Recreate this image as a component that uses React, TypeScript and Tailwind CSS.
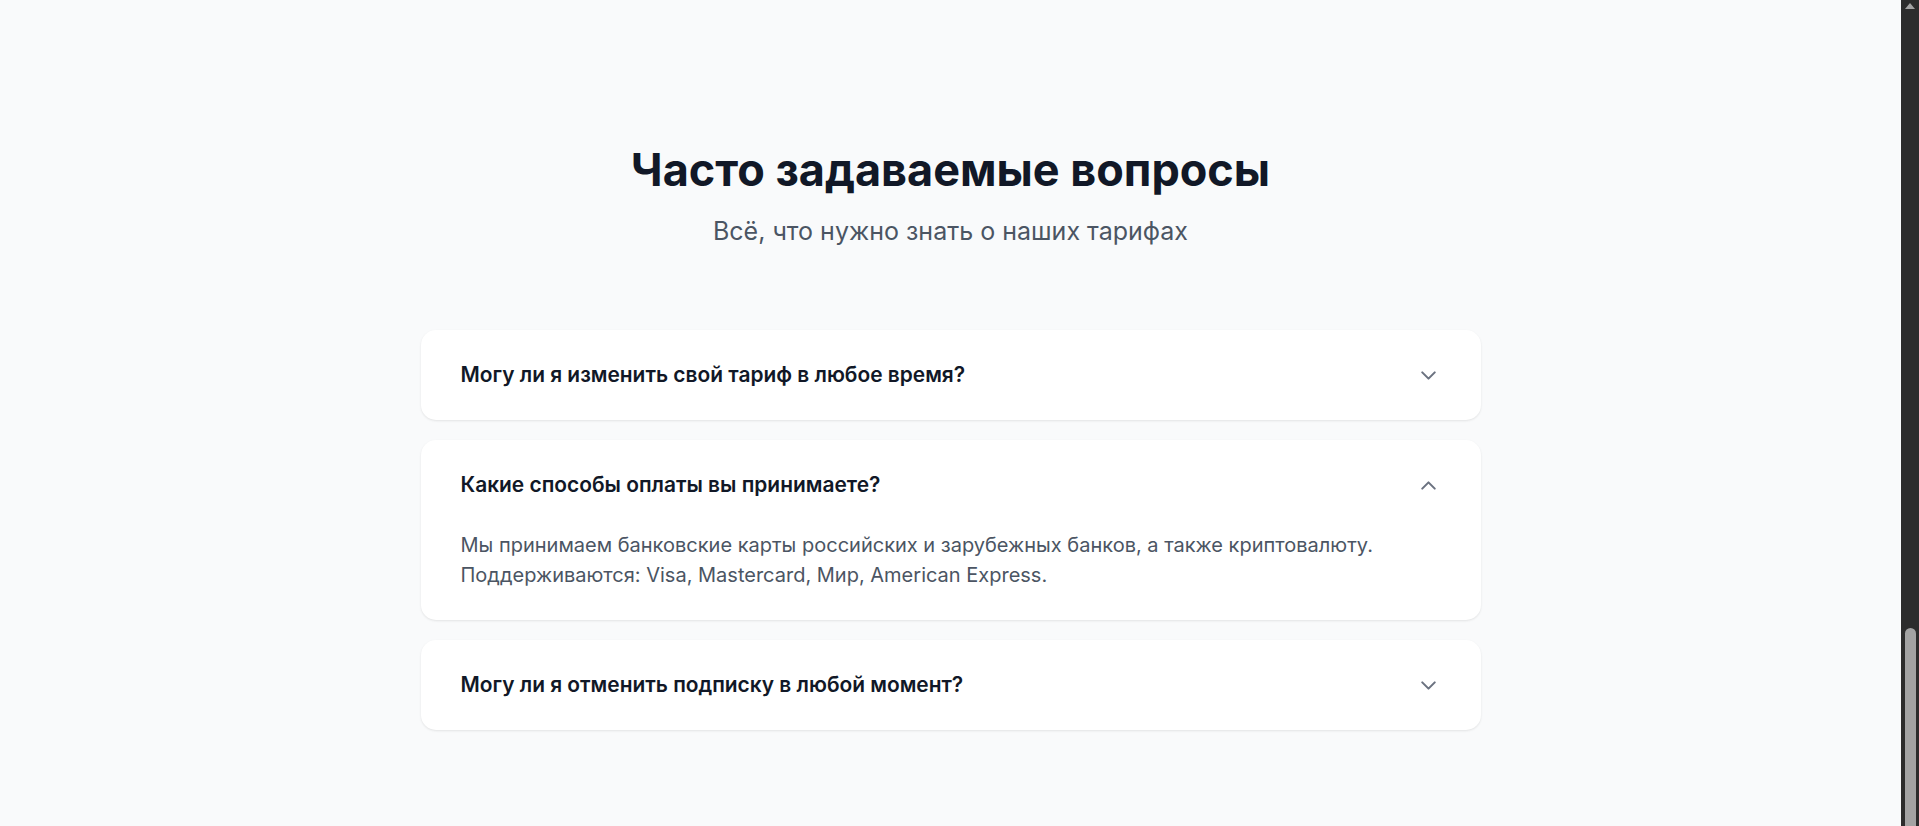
import React from "react";
import { ChevronDown, ChevronUp } from "lucide-react";

type Item = { q: string; a?: string[]; open?: boolean };

const items: Item[] = [
  { q: "Могу ли я изменить свой тариф в любое время?" },
  {
    q: "Какие способы оплаты вы принимаете?",
    open: true,
    a: [
      "Мы принимаем банковские карты российских и зарубежных банков, а также криптовалюту.",
      "Поддерживаются: Visa, Mastercard, Мир, American Express.",
    ],
  },
  { q: "Могу ли я отменить подписку в любой момент?" },
];

function FaqCard({ item }: { item: Item }) {
  return (
    <div className="rounded-[15px] bg-white shadow-[0_1px_3px_rgba(0,0,0,0.06),0_1px_2px_rgba(0,0,0,0.04)]">
      <div className="flex items-center justify-between px-[40px] py-[30px]">
        <span className="text-[20.9px] leading-[30px] font-semibold text-[#111827]">{item.q}</span>
        {item.open ? (
          <ChevronUp className="h-[25px] w-[25px] text-[#6b7280]" strokeWidth={2} />
        ) : (
          <ChevronDown className="h-[25px] w-[25px] text-[#6b7280]" strokeWidth={2} />
        )}
      </div>
      {item.open && item.a && (
        <div className="px-[40px] pb-[30px] text-[20px] leading-[30px] text-[#4b5563]">
          {item.a.map((line) => (
            <p key={line}>{line}</p>
          ))}
        </div>
      )}
    </div>
  );
}

export default function App() {
  return (
    <div className="flex h-[826px] w-full overflow-hidden font-['Inter','Noto_Sans',sans-serif]">
      <main className="flex-1 bg-[#f9fafb] pt-[145px]">
        <h2 className="text-center text-[45px] leading-[50px] font-bold text-[#111827]">
          Часто задаваемые вопросы
        </h2>
        <p className="mt-[19px] text-center text-[25px] leading-[35px] text-[#4b5563]">
          Всё, что нужно знать о наших тарифах
        </p>
        <div className="mx-auto mt-[81px] flex w-full max-w-[1060px] flex-col gap-[20px]">
          {items.map((it) => (
            <FaqCard key={it.q} item={it} />
          ))}
        </div>
      </main>
      <div className="flex w-[18px] flex-col bg-[#2c2c2c]">
        <div className="flex h-[17px] items-start justify-center pt-[3px]">
          <svg width="10" height="6" viewBox="0 0 10 6">
            <polygon points="5,0 10,6 0,6" fill="#a3a3a3" />
          </svg>
        </div>
        <div className="flex-1" />
        <div className="ml-[4px] mr-[3px] h-[198px] rounded-t-[6px] bg-[#a3a3a3]" />
      </div>
    </div>
  );
}
